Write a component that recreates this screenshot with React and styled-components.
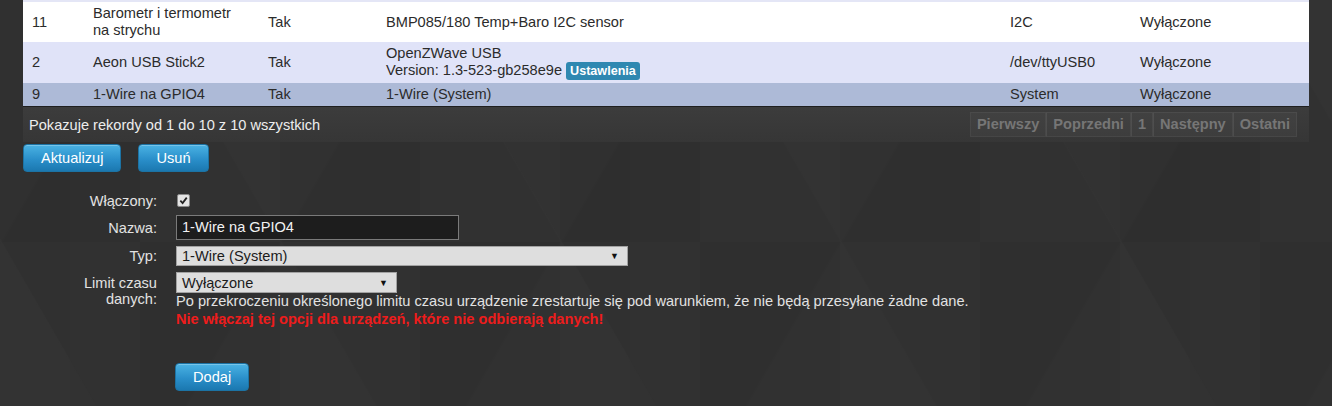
import React from "react";
import styled, { createGlobalStyle } from "styled-components";

const GlobalStyle = createGlobalStyle`
  html, body {
    margin: 0;
    padding: 0;
  }
  body {
    font-family: "Liberation Sans", Arial, sans-serif;
    font-size: 14.6px;
    background-color: #313131;
    background-image:
      linear-gradient(60deg, rgba(255, 255, 255, 0.012) 25%, transparent 25.5%, transparent 75%, rgba(255, 255, 255, 0.012) 75.5%),
      linear-gradient(120deg, rgba(0, 0, 0, 0.03) 25%, transparent 25.5%, transparent 75%, rgba(0, 0, 0, 0.03) 75.5%),
      linear-gradient(60deg, rgba(0, 0, 0, 0.02) 25%, transparent 25.5%, transparent 75%, rgba(0, 0, 0, 0.02) 75.5%);
    background-size: 280px 484px, 280px 484px, 560px 968px;
    background-position: 0 0, 140px 242px, 70px -120px;
  }
`;

const Page = styled.div`
  min-height: 406px;
  padding: 0 23px;
  box-sizing: border-box;
`;

const Grid = styled.table`
  width: 100%;
  border-collapse: collapse;
  table-layout: fixed;
  border-top: 2px solid #e4e6f6;
  border-bottom: 1px solid #1f1f1f;
  color: #2b2b2b;
  font-size: 14.6px;
`;

const Row = styled.tr`
  background: ${(p) => (p.$selected ? "#adbad7" : p.$alt ? "#e0e3f8" : "#ffffff")};
`;

const Cell = styled.td`
  padding: 3px 0 3px 9px;
  line-height: 17px;
  vertical-align: middle;
`;

const Badge = styled.span`
  display: inline-block;
  margin-left: 4px;
  padding: 1px 4px;
  border-radius: 3px;
  background: #2f88b1;
  color: #fff;
  font-size: 12.6px;
  font-weight: bold;
  line-height: 16px;
`;

const InfoBar = styled.div`
  display: flex;
  align-items: center;
  justify-content: space-between;
  height: 35px;
  padding: 0 12px 0 6px;
  background: linear-gradient(#3c3c3c, #363636);
  color: #ededed;
`;

const Pager = styled.div`
  display: flex;
`;

const PageButton = styled.span`
  height: 23px;
  line-height: 23px;
  padding: 0 6px;
  border: 1px solid rgba(255, 255, 255, 0.05);
  background: rgba(255, 255, 255, 0.03);
  color: #767676;
  font-weight: bold;
  & + & {
    border-left-color: rgba(255, 255, 255, 0.08);
  }
`;

const Actions = styled.div`
  display: flex;
  gap: 17px;
  margin-top: 2px;
`;

const Button = styled.button`
  height: 28px;
  padding: 0 17px;
  border: 1px solid #1c73a4;
  border-radius: 4px;
  background: linear-gradient(#4ab2e3, #2a8fca 55%, #1b78b0);
  color: #fff;
  font-family: inherit;
  font-size: 14.6px;
  box-shadow: inset 0 1px 0 rgba(255, 255, 255, 0.25);
`;

const Form = styled.div`
  display: grid;
  grid-template-columns: 134px 1fr;
  column-gap: 19px;
  row-gap: 6px;
  margin-top: 21px;
  color: #e2e2e2;
`;

const Label = styled.div`
  text-align: right;
  line-height: 16px;
  align-self: ${(p) => (p.$top ? "start" : "center")};
  padding-top: ${(p) => (p.$top ? "3px" : "0")};
`;

const Field = styled.div`
  display: flex;
  flex-direction: column;
  align-items: flex-start;
`;

const Check = styled.span`
  display: flex;
  align-items: center;
  justify-content: center;
  width: 11px;
  height: 11px;
  margin: 1px 0 2px 1px;
  background: #e4e4e4;
  border: 1px solid #8a8a8a;
  border-radius: 2px;
`;

const TextInput = styled.div`
  box-sizing: border-box;
  width: 283px;
  height: 25px;
  padding: 0 5px;
  line-height: 23px;
  background: #1d1d1d;
  border: 1px solid #7a7a7a;
  color: #f2f2f2;
`;

const Select = styled.div`
  box-sizing: border-box;
  display: flex;
  justify-content: space-between;
  align-items: center;
  width: ${(p) => p.$width}px;
  height: ${(p) => p.$height}px;
  padding: 0 8px 0 5px;
  background: #dedede;
  border: 1px solid #a2a2a2;
  color: #1b1b1b;
`;

const Arrow = styled.span`
  font-size: 9px;
  color: #111;
`;

const Hint = styled.div`
  line-height: 17px;
`;

const Warning = styled.div`
  line-height: 18px;
  color: #ee1c1c;
  font-weight: bold;
`;

const Submit = styled(Button)`
  margin-top: 35px;
  margin-left: -1px;
`;

const devices = [
  { id: "11", name: ["Barometr i termometr", "na strychu"], on: "Tak", hw: ["BMP085/180 Temp+Baro I2C sensor"], port: "I2C", timeout: "Wyłączone" },
  { id: "2", name: ["Aeon USB Stick2"], on: "Tak", hw: ["OpenZWave USB", "Version: 1.3-523-gb258e9e"], port: "/dev/ttyUSB0", timeout: "Wyłączone", settings: true, alt: true },
  { id: "9", name: ["1-Wire na GPIO4"], on: "Tak", hw: ["1-Wire (System)"], port: "System", timeout: "Wyłączone", selected: true },
];

const lines = (arr, extra) =>
  arr.map((t, i) => (
    <React.Fragment key={i}>
      {i > 0 && <br />}
      {t}
      {i === arr.length - 1 && extra}
    </React.Fragment>
  ));

export default function App() {
  return (
    <Page>
      <GlobalStyle />
      <Grid>
        <colgroup>
          <col style={{ width: 61 }} />
          <col style={{ width: 175 }} />
          <col style={{ width: 118 }} />
          <col style={{ width: 624 }} />
          <col style={{ width: 130 }} />
          <col />
        </colgroup>
        <tbody>
          {devices.map((d) => (
            <Row key={d.id} $alt={d.alt} $selected={d.selected}>
              <Cell>{d.id}</Cell>
              <Cell>{lines(d.name)}</Cell>
              <Cell>{d.on}</Cell>
              <Cell>{lines(d.hw, d.settings && <Badge>Ustawlenia</Badge>)}</Cell>
              <Cell>{d.port}</Cell>
              <Cell>{d.timeout}</Cell>
            </Row>
          ))}
        </tbody>
      </Grid>
      <InfoBar>
        <span>Pokazuje rekordy od 1 do 10 z 10 wszystkich</span>
        <Pager>
          <PageButton>Pierwszy</PageButton>
          <PageButton>Poprzedni</PageButton>
          <PageButton>1</PageButton>
          <PageButton>Następny</PageButton>
          <PageButton>Ostatni</PageButton>
        </Pager>
      </InfoBar>
      <Actions>
        <Button>Aktualizuj</Button>
        <Button>Usuń</Button>
      </Actions>
      <Form>
        <Label>Włączony:</Label>
        <Field>
          <Check>
            <svg width="9" height="9" viewBox="0 0 10 10">
              <path d="M1.5 5.2 L4 7.8 L8.6 1.8" fill="none" stroke="#222" strokeWidth="2" />
            </svg>
          </Check>
        </Field>
        <Label>Nazwa:</Label>
        <Field>
          <TextInput>1-Wire na GPIO4</TextInput>
        </Field>
        <Label>Typ:</Label>
        <Field>
          <Select $width={452} $height={20}>
            1-Wire (System)
            <Arrow>▼</Arrow>
          </Select>
        </Field>
        <Label $top>
          Limit czasu
          <br />
          danych:
        </Label>
        <Field>
          <Select $width={221} $height={21}>
            Wyłączone
            <Arrow>▼</Arrow>
          </Select>
          <Hint>
            Po przekroczeniu określonego limitu czasu urządzenie zrestartuje się pod warunkiem, że nie będą przesyłane żadne dane.
          </Hint>
          <Warning>Nie włączaj tej opcji dla urządzeń, które nie odbierają danych!</Warning>
          <Submit>Dodaj</Submit>
        </Field>
      </Form>
    </Page>
  );
}
